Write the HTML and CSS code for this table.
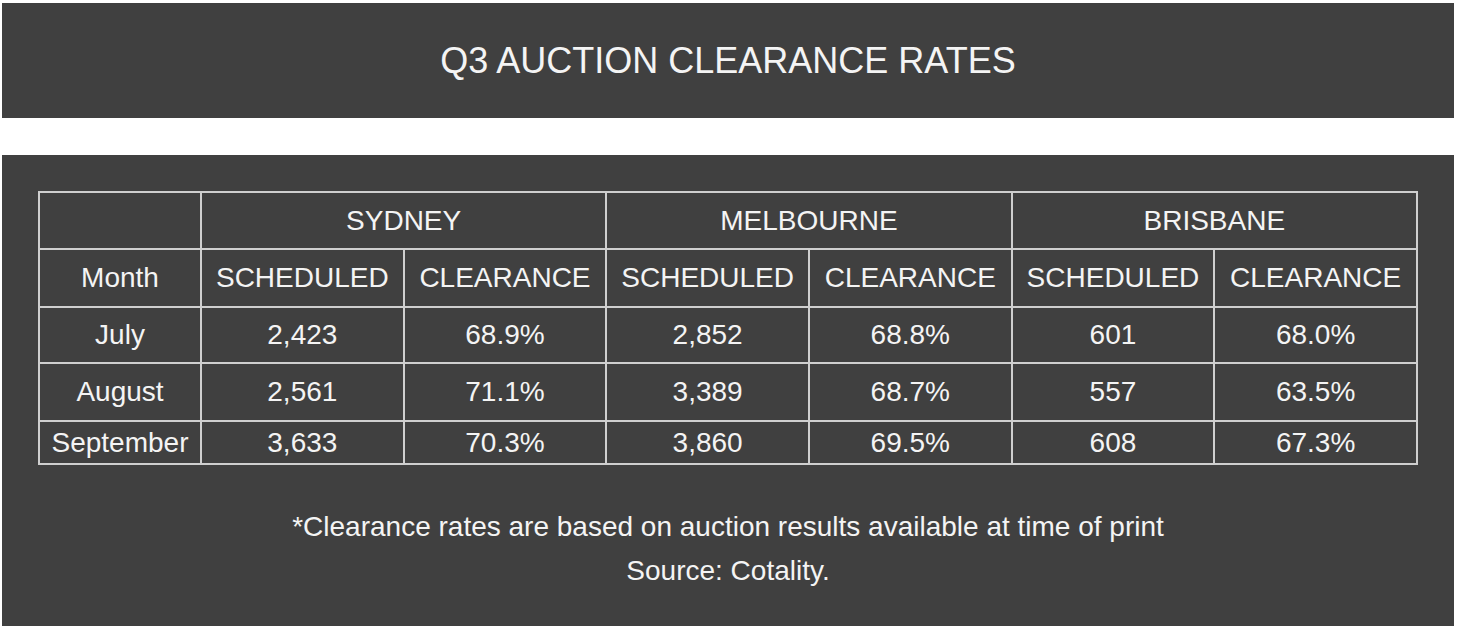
FILE: index.html
```html
<!DOCTYPE html>
<html lang="en">
<head>
<meta charset="utf-8">
<title>Q3 Auction Clearance Rates</title>
<link rel="stylesheet" href="styles.css">
</head>
<body>
<header class="title-box">
  <h1 class="title">Q3 AUCTION CLEARANCE RATES</h1>
</header>
<section class="table-box">
  <table class="rates">
    <colgroup>
      <col class="c-month">
      <col><col><col><col><col><col>
    </colgroup>
    <thead>
      <tr class="r-city">
        <th></th>
        <th colspan="2">SYDNEY</th>
        <th colspan="2">MELBOURNE</th>
        <th colspan="2">BRISBANE</th>
      </tr>
      <tr class="r-sub">
        <th>Month</th>
        <th>SCHEDULED</th><th>CLEARANCE</th>
        <th>SCHEDULED</th><th>CLEARANCE</th>
        <th>SCHEDULED</th><th>CLEARANCE</th>
      </tr>
    </thead>
    <tbody>
      <tr class="r-a">
        <td>July</td><td>2,423</td><td>68.9%</td><td>2,852</td><td>68.8%</td><td>601</td><td>68.0%</td>
      </tr>
      <tr class="r-b">
        <td>August</td><td>2,561</td><td>71.1%</td><td>3,389</td><td>68.7%</td><td>557</td><td>63.5%</td>
      </tr>
      <tr class="r-c">
        <td>September</td><td>3,633</td><td>70.3%</td><td>3,860</td><td>69.5%</td><td>608</td><td>67.3%</td>
      </tr>
    </tbody>
  </table>
  <div class="notes">
    <p>*Clearance rates are based on auction results available at time of print</p>
    <p>Source: Cotality.</p>
  </div>
</section>
</body>
</html>
```
FILE: styles.css
```css
html, body {
  background: #ffffff;
}
body {
  margin: 3px 4px 0 2px;
  font-family: "Liberation Sans", Arial, Helvetica, sans-serif;
  color: #f4f4f4;
}
.title-box {
  background: #404040;
  height: 115px;
  display: flex;
  align-items: center;
  justify-content: center;
}
.title {
  margin: 0;
  font-size: 36px;
  font-weight: 400;
  line-height: 40px;
}
.table-box {
  margin-top: 37px;
  background: #404040;
  height: 471px;
  box-sizing: border-box;
  padding: 36px 36px 0 36px;
}
.rates {
  width: 1380px;
  table-layout: fixed;
  border-collapse: collapse;
  font-size: 28px;
}
.rates col.c-month {
  width: 162px;
}
.rates th,
.rates td {
  border: 2px solid #cfcfcf;
  padding: 0;
  text-align: center;
  vertical-align: middle;
  font-weight: 400;
  line-height: 32px;
}
.r-city { height: 57px; }
.r-sub { height: 58px; }
.r-a { height: 56px; }
.r-b { height: 58px; }
.r-c { height: 43px; }
.notes {
  margin-top: 40px;
  text-align: center;
  font-size: 28px;
}
.notes p {
  margin: 0;
  line-height: 44px;
}
```
